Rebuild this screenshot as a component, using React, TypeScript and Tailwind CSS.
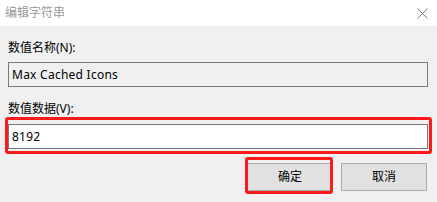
import React from "react";

export default function App() {
  const font = { fontFamily: '"Noto Sans", "Noto Sans CJK SC", sans-serif' };
  return (
    <div
      className="relative w-[437px] h-[202px] overflow-hidden bg-[#f0f0f0] text-[12px] text-black"
      style={font}
    >
      <div className="h-[26px] bg-white flex items-center justify-between pl-[5px] pr-[9px]">
        <span className="text-[12px] leading-[16px] text-[#9a9a9a]">编辑字符串</span>
        <svg width="11" height="11" viewBox="0 0 11 11" className="block">
          <path d="M0.5 0.5 L10.5 10.5 M10.5 0.5 L0.5 10.5" stroke="#7a7a7a" strokeWidth="1" fill="none" />
        </svg>
      </div>
      <div className="px-[8px] pt-[14px] flex flex-col">
        <div className="h-[16px] leading-[16px]">数值名称(N):</div>
        <div className="mt-[6px] h-[25px] w-[420px] border border-[#7a7a7a] bg-[#f0f0f0] flex items-center pl-[3px] leading-[16px] tracking-[0.25px]">
          Max Cached Icons
        </div>
        <div className="mt-[14px] h-[16px] leading-[16px]">数值数据(V):</div>
        <div className="mt-[7px] h-[25px] w-[420px] border border-[#7a7a7a] bg-white flex items-center pl-[3px] leading-[16px] tracking-[0.25px]">
          8192
        </div>
        <div className="mt-[14px] flex justify-end gap-[8px] pr-[2px]">
          <div className="w-[86px] h-[28px] bg-[#e1e1e1] border border-[#adadad] flex items-center justify-center">确定</div>
          <div className="w-[86px] h-[28px] bg-[#e1e1e1] border border-[#adadad] flex items-center justify-center">取消</div>
        </div>
      </div>
      <div className="absolute left-[5px] top-[117px] w-[427px] h-[37px] border-[3px] border-[#ff1a1a] rounded-[3px]" />
      <div className="absolute left-[245px] top-[157px] w-[88px] h-[37px] border-[3px] border-[#ff1a1a] rounded-[3px]" />
    </div>
  );
}
